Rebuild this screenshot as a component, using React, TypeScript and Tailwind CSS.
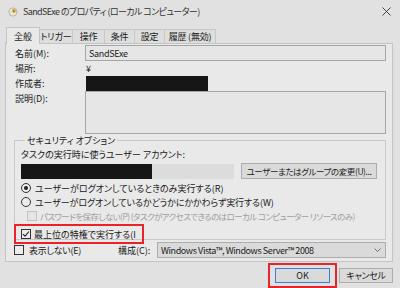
import React from "react";

const font = {
  fontFamily: '"Noto Sans CJK JP", "Noto Sans", sans-serif',
  fontFeatureSettings: '"palt"',
};

/** Small Windows-style radio button */
function Radio({ checked }: { checked?: boolean }) {
  return (
    <span className="flex h-[10px] w-[10px] shrink-0 items-center justify-center rounded-full border border-[#333] bg-[#ececec]">
      {checked && <span className="h-[4px] w-[4px] rounded-full bg-[#222]" />}
    </span>
  );
}

/** Checkbox, optionally checked or disabled */
function Check({ checked, disabled }: { checked?: boolean; disabled?: boolean }) {
  return (
    <span
      className={
        "flex h-[10px] w-[10px] shrink-0 items-center justify-center border " +
        (disabled ? "border-[#c2c2c2] bg-[#e6e6e6]" : "border-[#333] bg-[#ececec]")
      }
    >
      {checked && (
        <svg width="8" height="8" viewBox="0 0 8 8">
          <path d="M1 4.2 L3 6.2 L7 1.5" fill="none" stroke="#222" strokeWidth="1.1" />
        </svg>
      )}
    </span>
  );
}

const tabs = [
  { label: "トリガー", w: "w-[34px]" },
  { label: "操作", w: "w-[33px]" },
  { label: "条件", w: "w-[31px]" },
  { label: "設定", w: "w-[31px]" },
  { label: "履歴 (無効)", w: "w-[52px]" },
];

export default function App() {
  return (
    <div className="flex h-[288px] w-[400px] flex-col overflow-hidden whitespace-nowrap bg-[#e1e1e1] text-[9px] leading-none text-[#1a1a1a]" style={font}>
      {/* title bar */}
      <div className="flex h-[23px] shrink-0 items-center pl-[8px] pr-[8px]">
        <svg width="10" height="10" viewBox="0 0 10 10" className="mt-[1px]">
          <circle cx="5" cy="5" r="4.5" fill="#b8b8b8" />
          <circle cx="5" cy="5" r="3.4" fill="#f0e7c2" />
          <path d="M5 5 L5 1.6 A3.4 3.4 0 0 1 8.4 5 Z" fill="#e3b53a" />
          <path d="M5 2.5 V5 H7" fill="none" stroke="#555" strokeWidth="0.7" />
        </svg>
        <span className="ml-[5px] text-[9px] tracking-[-0.6px] text-[#333]">SandSExe のプロパティ (ローカル コンピューター)</span>
        <span className="flex-1" />
        <svg width="9" height="9" viewBox="0 0 9 9" className="mr-[1px]">
          <path d="M0.5 0.5 L8.5 8.5 M8.5 0.5 L0.5 8.5" stroke="#333" strokeWidth="0.9" />
        </svg>
      </div>

      {/* tabs */}
      <div className="ml-[6px] flex h-[20px] shrink-0 items-end">
        <div className="relative z-10 -mb-[1px] flex h-[17px] w-[34px] items-center justify-center border border-b-0 border-[#c4c4c4] bg-[#e9e9e9]">
          全般
        </div>
        {tabs.map((t) => (
          <div
            key={t.label}
            className={
              "-ml-[1px] flex h-[14px] items-center justify-center border border-b-0 border-[#c8c8c8] bg-[#dedede] tracking-[-0.2px] first:ml-0 " +
              t.w
            }
          >
            {t.label}
          </div>
        ))}
      </div>

      {/* tab panel */}
      <div className="ml-[5px] flex h-[219px] w-[388px] shrink-0 flex-col border border-[#c4c4c4] bg-[#e9e9e9] pl-[8px] pr-[6px]">
        <div className="mt-[1px] flex h-[16px] items-center">
          <span className="w-[71px] pl-[1px]">名前(M):</span>
          <div className="flex h-[16px] flex-1 items-center border border-[#a6a6a6] bg-[#e6e6e6] pl-[3px] tracking-[-0.3px]">SandSExe</div>
        </div>
        <div className="flex h-[15px] items-center">
          <span className="w-[72px] pl-[1px]">場所:</span>
          <span>¥</span>
        </div>
        <div className="flex h-[15px] items-center">
          <span className="w-[72px] pl-[1px]">作成者:</span>
          <div className="h-[15px] w-[122px] bg-[#161616]" />
        </div>
        <div className="flex h-[43px]">
          <span className="w-[71px] pl-[1px] pt-[3px]">説明(D):</span>
          <div className="flex-1 border border-[#a6a6a6] bg-[#e6e6e6]" />
        </div>

        {/* security options group */}
        <fieldset className="mt-[2px] h-[104px] border border-[#c9c9c9] pl-[6px]">
          <legend className="ml-[4px] px-[2px]">セキュリティ オプション</legend>
          <div className="mt-[4px] flex h-[11px] items-center">タスクの実行時に使うユーザー アカウント:</div>
          <div className="mt-[3px] flex h-[16px] items-center">
            <div className="flex h-[15px] w-[213px] bg-[#dcdcdc]">
              <div className="h-full w-[131px] bg-[#161616]" />
            </div>
            <div className="ml-[7px] flex h-[16px] w-[136px] items-center justify-center border border-[#adadad] bg-[#dadada] text-[8.5px] tracking-[-0.4px]">
              ユーザーまたはグループの変更(U)...
            </div>
          </div>
          <div className="mt-[2px] flex h-[14px] items-center gap-[4px]">
            <Radio checked />
            <span>ユーザーがログオンしているときのみ実行する(R)</span>
          </div>
          <div className="flex h-[14px] items-center gap-[4px]">
            <Radio />
            <span className="tracking-[-0.1px]">ユーザーがログオンしているかどうかにかかわらず実行する(W)</span>
          </div>
          <div className="flex h-[14px] items-center gap-[3px] pl-[6px] text-[#a0a0a0]">
            <Check disabled />
            <span className="text-[8.5px] tracking-[-0.6px]">パスワードを保存しない(P) (タスクがアクセスできるのはローカル コンピューター リソースのみ)</span>
          </div>
          <div className="-ml-[7px] mt-[1px] flex h-[20px] w-[130px] items-center gap-[3px] border-2 border-[#e8242a] pl-[5px]">
            <Check checked />
            <span>最上位の特権で実行する(I</span>
          </div>
        </fieldset>

        {/* bottom row */}
        <div className="mt-[1px] flex h-[18px] items-center">
          <Check />
          <span className="ml-[5px] w-[89px] tracking-[-0.3px]">表示しない(E)</span>
          <span className="w-[39px]">構成(C):</span>
          <div className="flex h-[16px] flex-1 items-center border border-[#adadad] bg-[#dadada] pl-[3px] pr-[4px]">
            <span className="flex-1 tracking-[-0.4px]">Windows Vista™, Windows Server™ 2008</span>
            <svg width="7" height="4" viewBox="0 0 7 4">
              <path d="M0.5 0.5 L3.5 3.5 L6.5 0.5" fill="none" stroke="#555" strokeWidth="0.8" />
            </svg>
          </div>
        </div>
      </div>

      {/* dialog buttons */}
      <div className="flex h-[26px] items-start justify-end pr-[7px]">
        <div className="mt-[1px] flex h-[25px] w-[69px] items-center justify-center border-2 border-[#e8242a]">
          <div className="flex h-[15px] w-[55px] items-center justify-center border border-[#3b7fd6] bg-[#dadada]">OK</div>
        </div>
        <div className="ml-[2px] mt-[6px] flex h-[15px] w-[54px] items-center justify-center border border-[#adadad] bg-[#dadada] tracking-[-0.3px]">
          キャンセル
        </div>
      </div>
    </div>
  );
}
